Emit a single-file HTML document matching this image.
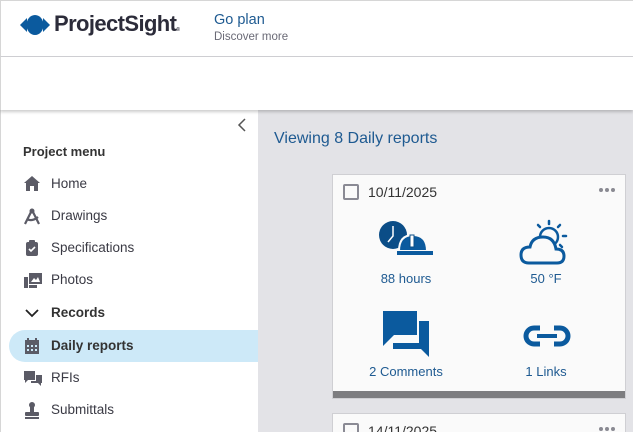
<!DOCTYPE html>
<html><head><style>
*{margin:0;padding:0;box-sizing:border-box}
html,body{width:633px;height:432px;overflow:hidden}
body{font-family:"Liberation Sans",sans-serif;background:#fff;position:relative}
.hdr{position:absolute;left:0;top:0;width:633px;height:57px;border-bottom:1px solid #d0d0d4;border-top:1px solid #d6d6d6;border-left:1px solid #d6d6d6;background:#fff}
.band{position:absolute;left:0;top:57px;width:633px;height:53px;background:#fff;box-shadow:0 2px 3px rgba(0,0,0,.2);z-index:2;border-left:1px solid #d6d6d6}
.side{position:absolute;left:0;top:110px;width:258px;height:322px;background:#fff;border-left:1px solid #d6d6d6}
.main{position:absolute;left:258px;top:110px;width:375px;height:322px;background:#e3e3e7;overflow:hidden}
.item{position:absolute;left:22px;font-size:13.5px;color:#3a3a44;height:20px;line-height:20px}
.item svg{position:absolute;left:0;top:1px}
.item span{position:absolute;left:28px;white-space:nowrap}
.card{position:absolute;left:74px;width:294px;background:#fafafa;border:1px solid #cfcfd3}
.lbl{position:absolute;font-size:13px;color:#1e5a91;text-align:center;width:140px}
.dots{position:absolute;right:8px;top:13px;width:18px;height:5px}
.dots i{float:left;width:4px;height:4px;border-radius:50%;background:#8a8a92;margin-right:2px}
</style></head><body>
<div class="hdr">
<svg style="position:absolute;left:19px;top:12px" width="30" height="24" viewBox="0 0 30 24"><path d="M0 12 L7 5 L7 19Z" fill="#0b5a9e"/><path d="M30 12 L23 5 L23 19Z" fill="#0b5a9e"/><ellipse cx="15" cy="12" rx="8.5" ry="10" fill="#0b5a9e"/></svg>
<div style="position:absolute;left:53px;top:10px;font-size:22px;font-weight:bold;color:#2c2c3a;letter-spacing:-0.6px">ProjectSight<span style="font-size:5px">®</span></div>
<div style="position:absolute;left:213px;top:11px;font-size:14.5px;color:#1e5a91">Go plan</div>
<div style="position:absolute;left:213px;top:30px;font-size:11.5px;color:#6a6a76">Discover more</div>
</div>
<div class="band"></div>
<div class="side">
<svg style="position:absolute;left:236px;top:8px" width="10" height="14"><path d="M8 1 L2 7 L8 13" fill="none" stroke="#555" stroke-width="1.5"/></svg>
<div style="position:absolute;left:22px;top:34px;font-size:13px;font-weight:bold;color:#333">Project menu</div>
<div class="item" style="top:64px"><svg width="18" height="18" viewBox="0 0 18 18"><path d="M9 1 L1 8 L3 8 L3 16 L7 16 L7 11 L11 11 L11 16 L15 16 L15 8 L17 8Z" fill="#5b5b66"/></svg><span>Home</span></div>
<div class="item" style="top:96px"><svg width="18" height="18" viewBox="0 0 18 18"><circle cx="9" cy="4" r="2.5" fill="#5b5b66"/><path d="M8 5 L2 17 M10 5 L16 17 M4 12 Q9 15 15 10" stroke="#5b5b66" stroke-width="2.2" fill="none"/></svg><span>Drawings</span></div>
<div class="item" style="top:128px"><svg width="18" height="18" viewBox="0 0 18 18"><rect x="3" y="3" width="12" height="14" rx="2" fill="#5b5b66"/><rect x="6" y="1" width="6" height="4" rx="1" fill="#5b5b66"/><path d="M6 10 L8 12 L12 8" stroke="#fff" stroke-width="1.6" fill="none"/></svg><span>Specifications</span></div>
<div class="item" style="top:160px"><svg width="20" height="18" viewBox="0 0 20 18"><rect x="1" y="6" width="4" height="11" fill="#5b5b66"/><rect x="6" y="2" width="13" height="11" fill="#5b5b66"/><path d="M8 11 L11 7 L13 9 L15 6 L17 11Z" fill="#fff"/><rect x="6" y="14" width="8" height="3" fill="#5b5b66"/></svg><span>Photos</span></div>
<div class="item" style="top:193px;font-weight:bold;color:#333"><svg width="18" height="18"><path d="M3 6 L9 12 L15 6" stroke="#222" stroke-width="1.8" fill="none"/></svg><span>Records</span></div>
<div style="position:absolute;left:8px;top:220px;width:250px;height:32px;background:#cde9f8;border-radius:16px 0 0 16px"></div>
<div class="item" style="top:226px;font-weight:bold;color:#333"><svg width="18" height="18" viewBox="0 0 18 18"><rect x="2" y="3" width="14" height="14" fill="#5b5b66"/><rect x="4" y="1" width="2" height="4" fill="#5b5b66"/><rect x="12" y="1" width="2" height="4" fill="#5b5b66"/><g fill="#cde9f8"><rect x="4" y="8" width="2" height="2"/><rect x="8" y="8" width="2" height="2"/><rect x="12" y="8" width="2" height="2"/><rect x="4" y="12" width="2" height="2"/><rect x="8" y="12" width="2" height="2"/><rect x="12" y="12" width="2" height="2"/></g></svg><span>Daily reports</span></div>
<div class="item" style="top:258px"><svg width="20" height="18" viewBox="0 0 20 18"><path d="M1 2 H12 V11 H5 L2 14 V11 H1Z" fill="#5b5b66"/><path d="M13 6 H19 V14 H18 V17 L15 14 H8 V12 H13Z" fill="#5b5b66"/></svg><span>RFIs</span></div>
<div class="item" style="top:290px"><svg width="18" height="18" viewBox="0 0 18 18"><circle cx="9" cy="4" r="3" fill="#5b5b66"/><rect x="7" y="6" width="4" height="5" fill="#5b5b66"/><rect x="2" y="11" width="14" height="4" rx="1" fill="#5b5b66"/><rect x="2" y="16" width="14" height="2" fill="#5b5b66"/></svg><span>Submittals</span></div>
</div>
<div class="main">
<div style="position:absolute;left:16px;top:20px;font-size:16px;color:#1e5a91">Viewing 8 Daily reports</div>
<div class="card" style="top:64px;height:225px">
<div style="position:absolute;left:10px;top:9px;width:16px;height:16px;border:2px solid #8a8a94;border-radius:2px"></div>
<div style="position:absolute;left:35px;top:9px;font-size:14px;color:#333">10/11/2025</div>
<div class="dots"><i></i><i></i><i></i></div>
<svg style="position:absolute;left:46px;top:46px" width="58" height="38" viewBox="0 0 58 38"><circle cx="14" cy="14" r="14" fill="#0b4d87"/><path d="M14 5 V15 L9 21" stroke="#fff" stroke-width="1.5" fill="none"/><path d="M20 30 Q20 14 34 14 Q48 14 48 30Z" fill="#0b5a9e" stroke="#fafafa" stroke-width="2"/><rect x="18" y="30" width="36" height="4" fill="#0b5a9e"/><rect x="31" y="14" width="4" height="12" fill="#fff" stroke="#0b4d87"/></svg>
<svg style="position:absolute;left:186px;top:44px" width="52" height="48" viewBox="0 0 52 48"><g stroke="#0b5a9e" stroke-width="2.5" stroke-linecap="round"><path d="M30 2 V5 M19 6 L21 8 M41 6 L39 8 M47 17 H44 M43 28 L41 26"/></g><circle cx="30" cy="18" r="9" fill="none" stroke="#0b5a9e" stroke-width="2.5"/><path d="M10 44 Q2 44 2 36 Q2 28 11 28 Q13 18 24 18 Q35 18 37 30 Q45 30 45 37 Q45 44 38 44Z" fill="#fafafa" stroke="#0b5a9e" stroke-width="3"/></svg>
<div class="lbl" style="left:3px;top:96px">88 hours</div>
<div class="lbl" style="left:143px;top:96px">50 °F</div>
<svg style="position:absolute;left:50px;top:136px" width="48" height="48" viewBox="0 0 48 48"><path d="M0 0 H34 V24 H11 L0 35Z" fill="#0b5a9e"/><path d="M36 10 H46 V46 L38 38 H10 V32 H36Z" fill="#0b5a9e"/></svg>
<svg style="position:absolute;left:190px;top:150px" width="48" height="22" viewBox="0 0 48 22"><path d="M17 3 H11 A8 8 0 0 0 11 19 H17 M31 3 H37 A8 8 0 0 1 37 19 H31" stroke="#0b5a9e" stroke-width="5" fill="none"/><rect x="14" y="9" width="20" height="4" fill="#0b5a9e"/></svg>
<div class="lbl" style="left:3px;top:189px">2 Comments</div>
<div class="lbl" style="left:143px;top:189px">1 Links</div>
<div style="position:absolute;left:0;bottom:0;width:100%;height:7px;background:#7d7d80"></div>
</div>
<div class="card" style="top:303px;height:40px">
<div style="position:absolute;left:10px;top:9px;width:16px;height:16px;border:2px solid #8a8a94;border-radius:2px"></div>
<div style="position:absolute;left:35px;top:9px;font-size:14px;color:#333">14/11/2025</div>
<div class="dots"><i></i><i></i><i></i></div>
</div>
</div>
</body></html>
